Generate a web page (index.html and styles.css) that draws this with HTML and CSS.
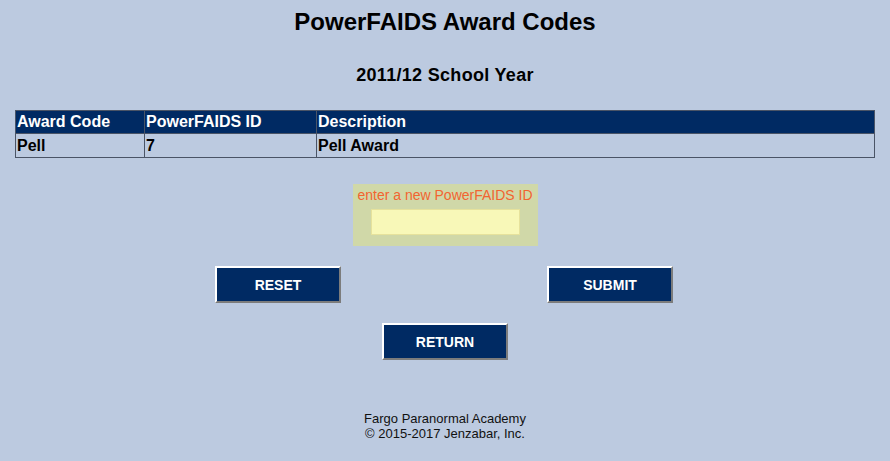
FILE: index.html
```html
<!DOCTYPE html>
<html lang="en">
<head>
    <meta charset="UTF-8">
    <title>PowerFAIDS Award Codes</title>
    <link rel="stylesheet" href="styles.css">
</head>
<body>
    <h1>PowerFAIDS Award Codes</h1>
    <h2>2011/12 School Year</h2>

    <table class="codes">
        <tr>
            <th class="col-code">Award Code</th>
            <th class="col-id">PowerFAIDS ID</th>
            <th>Description</th>
        </tr>
        <tr>
            <td>Pell</td>
            <td>7</td>
            <td>Pell Award</td>
        </tr>
    </table>

    <form class="edit-form" onsubmit="return false;">
        <div class="entry">
            <label for="pfid">enter a new PowerFAIDS ID</label>
            <input type="text" id="pfid" name="pfid">
        </div>
        <div class="button-row">
            <button type="reset" class="btn">RESET</button>
            <button type="submit" class="btn">SUBMIT</button>
        </div>
        <div class="button-row single">
            <button type="button" class="btn">RETURN</button>
        </div>
    </form>

    <div class="footer">
        Fargo Paranormal Academy<br>
        &copy; 2015-2017 Jenzabar, Inc.
    </div>
</body>
</html>
```

FILE: styles.css
```css
body {
    margin: 0;
    padding: 0;
    background-color: #bccae0;
    font-family: "Liberation Sans", Arial, sans-serif;
    color: #000;
}
h1 {
    font-size: 24px;
    line-height: 28px;
    text-align: center;
    margin: 8px 0 0 0;
}
h2 {
    font-size: 18px;
    line-height: 20px;
    letter-spacing: 0.3px;
    text-align: center;
    margin: 29px 0 0 0;
}
.codes {
    width: 860px;
    margin: 25px 15px 0 15px;
    border-collapse: collapse;
    border: 1px solid #4a5466;
    font-size: 16px;
    font-weight: bold;
}
.codes th,
.codes td {
    text-align: left;
    padding: 2px 2px 2px 1px;
    border-left: 1px solid #4a5466;
    line-height: 18px;
}
.codes th {
    background-color: #002a63;
    color: #fff;
    border-bottom: 1px solid #4a5466;
}
.codes td {
    padding-top: 3px;
    padding-bottom: 2px;
}
.col-code {
    width: 125px;
}
.col-id {
    width: 168px;
}
.edit-form {
    margin-top: 26px;
}
.entry {
    width: 185px;
    height: 62px;
    margin: 0 auto;
    background-color: #d0d8a8;
    text-align: center;
    box-sizing: border-box;
    padding-top: 3px;
}
.entry label {
    display: block;
    color: #f26430;
    font-size: 14px;
    line-height: 16px;
}
.entry input {
    display: block;
    width: 149px;
    height: 26px;
    margin: 6px auto 0 auto;
    box-sizing: border-box;
    background-color: #f8f8b8;
    border: 1px solid #e6e29c;
    padding: 0;
    outline: none;
}
.button-row {
    width: 460px;
    padding-right: 2px;
    box-sizing: border-box;
    margin: 20px auto 0 auto;
    display: flex;
    justify-content: space-between;
}
.button-row.single {
    justify-content: center;
    padding: 0;
    margin-top: 20px;
}
.btn {
    width: 126px;
    height: 37px;
    background-color: #002a63;
    color: #fff;
    font-family: "Liberation Sans", Arial, sans-serif;
    font-size: 14px;
    font-weight: bold;
    border: 2px solid;
    border-color: #ffffff #7c7c7c #7c7c7c #ffffff;
    padding: 0;
    cursor: pointer;
}
.footer {
    margin-top: 51px;
    text-align: center;
    font-size: 13px;
    line-height: 15px;
    color: #111;
}
```
